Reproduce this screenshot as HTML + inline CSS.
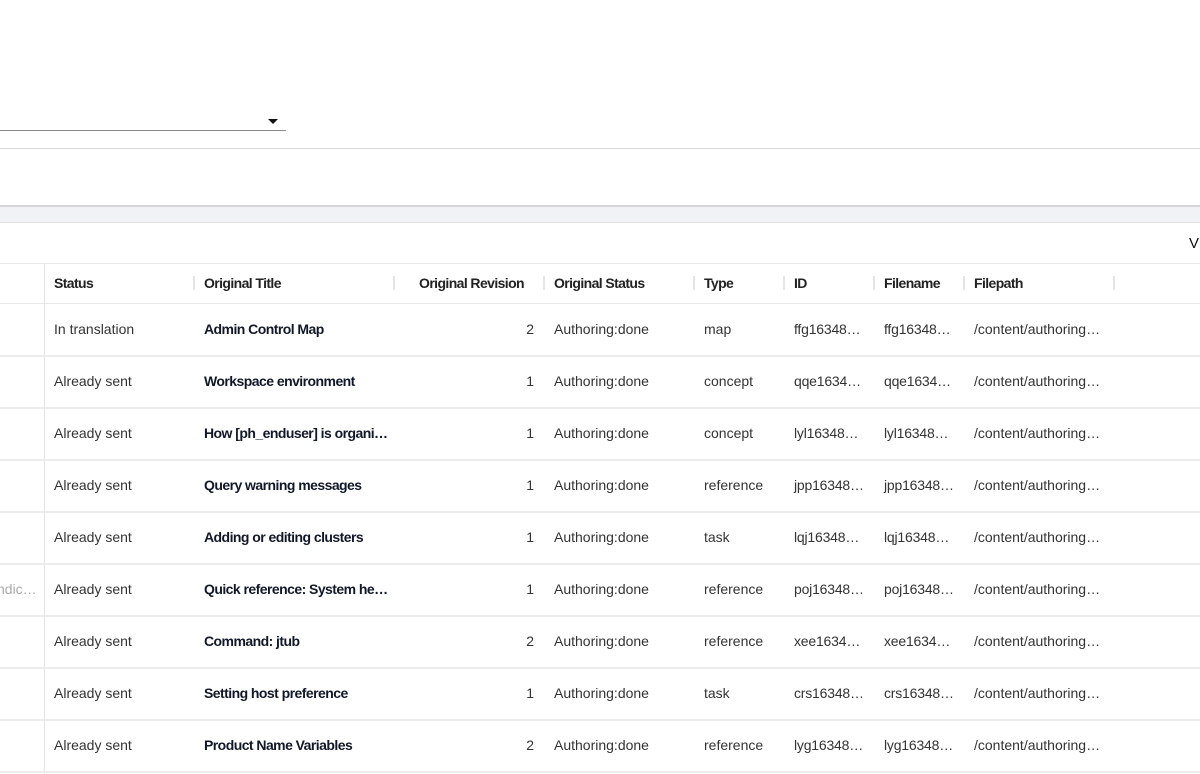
<!DOCTYPE html>
<html><head><style>
*{margin:0;padding:0;box-sizing:border-box}
body{width:1200px;height:774px;overflow:hidden;background:#fff;font-family:"Liberation Sans",Arial,sans-serif;font-size:14px;color:#333;position:relative}
.a{position:absolute}
.hl{position:absolute;left:0;width:1200px;height:1px;background:#e6e6e6}
.t{position:absolute;white-space:nowrap;line-height:16px}
.h{font-weight:bold;color:#222;top:275px;letter-spacing:-0.6px}
.sep{position:absolute;top:276px;width:2px;height:14px;background:#e5e5e5}
.b{font-weight:bold;color:#111827;letter-spacing:-0.55px}
</style></head><body>
<div class="a" style="left:0;top:130px;width:286px;height:1px;background:#8a8a8a"></div>
<div class="a" style="left:268px;top:119px;width:0;height:0;border-left:5px solid transparent;border-right:5px solid transparent;border-top:5px solid #111"></div>
<div class="hl" style="top:148px;background:#d9d9d9"></div>
<div class="a" style="left:0;top:205px;width:1200px;height:18px;background:#f0f2f5;border-top:2px solid #d6d6d6;border-bottom:1px solid #e3e3e3"></div>
<div class="t" style="left:1189px;top:236px;color:#111;font-size:15px">V</div>
<div class="hl" style="top:263px"></div>
<div class="hl" style="top:303px"></div>
<div class="a" style="left:44px;top:264px;width:1px;height:510px;background:#e3e3e3"></div>
<div class="t h" style="left:54px">Status</div>
<div class="t h" style="left:204px">Original Title</div>
<div class="t h" style="right:676px">Original Revision</div>
<div class="t h" style="left:554px">Original Status</div>
<div class="t h" style="left:704px">Type</div>
<div class="t h" style="left:794px">ID</div>
<div class="t h" style="left:884px">Filename</div>
<div class="t h" style="left:974px">Filepath</div>
<div class="sep" style="left:193px"></div><div class="sep" style="left:393px"></div><div class="sep" style="left:543px"></div><div class="sep" style="left:693px"></div><div class="sep" style="left:783px"></div><div class="sep" style="left:873px"></div><div class="sep" style="left:963px"></div><div class="sep" style="left:1113px"></div>
<div id="rows"></div>
<script>
var d=[["In translation","Admin Control Map","2","map","ffg16348…"],
["Already sent","Workspace environment","1","concept","qqe1634…"],
["Already sent","How [ph_enduser] is organi…","1","concept","lyl16348…"],
["Already sent","Query warning messages","1","reference","jpp16348…"],
["Already sent","Adding or editing clusters","1","task","lqj16348…"],
["Already sent","Quick reference: System he…","1","reference","poj16348…"],
["Already sent","Command: jtub","2","reference","xee1634…"],
["Already sent","Setting host preference","1","task","crs16348…"],
["Already sent","Product Name Variables","2","reference","lyg16348…"]];
var h="";
d.forEach(function(r,i){var y=304+i*52,ty=y+17;
h+='<div class="hl" style="top:'+(y+51)+'px;height:2px;background:#ececec"></div>';
if(i==5)h+='<div class="t" style="left:-3px;top:'+ty+'px;color:#aaa">ndic…</div>';
h+='<div class="t" style="left:54px;top:'+ty+'px">'+r[0]+'</div>';
h+='<div class="t b" style="left:204px;top:'+ty+'px">'+r[1]+'</div>';
h+='<div class="t" style="right:666px;top:'+ty+'px">'+r[2]+'</div>';
h+='<div class="t" style="left:554px;top:'+ty+'px">Authoring:done</div>';
h+='<div class="t" style="left:704px;top:'+ty+'px">'+r[3]+'</div>';
h+='<div class="t" style="left:794px;top:'+ty+'px;letter-spacing:-0.2px">'+r[4]+'</div>';
h+='<div class="t" style="left:884px;top:'+ty+'px;letter-spacing:-0.2px">'+r[4]+'</div>';
h+='<div class="t" style="left:974px;top:'+ty+'px">/content/authoring…</div>';});
document.getElementById("rows").innerHTML=h;
</script>
</body></html>
